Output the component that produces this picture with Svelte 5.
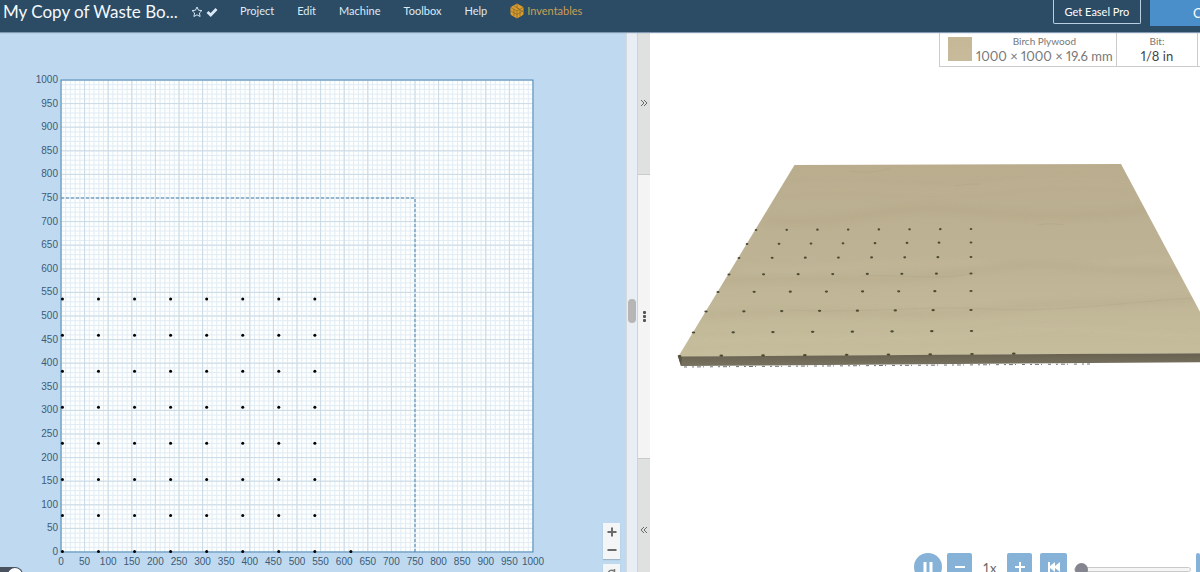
<script lang="ts">
	const menus = ['Project', 'Edit', 'Machine', 'Toolbox', 'Help'];

	// bed drawing: 1000 mm shown over 472 units
	const size = 472;
	const left = 61;
	const bottom = 520;
	const scale = size / 1000;
	const minor = Array.from({ length: 101 }, (_, i) => i * 10);
	const major = Array.from({ length: 21 }, (_, i) => i * 50);
	const x = (mm: number) => left + mm * scale;
	const y = (mm: number) => bottom - mm * scale;

	const pitch = 76.4;
	const holes = Array.from({ length: 8 }, (_, row) =>
		Array.from({ length: row === 0 ? 9 : 8 }, (_, col) => [3 + col * pitch, 1 + row * pitch])
	).flat();

	// each row of drilled holes on the board: first x, first y, last x, last y
	const rows = [
		[756, 230, 971, 229],
		[747, 244, 971, 242.5],
		[739, 258, 971, 257],
		[729, 274.5, 971, 273.5],
		[718, 292, 971, 291],
		[706, 311.5, 971, 310],
		[693.5, 332.5, 971.5, 331],
		[679.5, 356, 972, 354]
	];
	const drilled = rows.flatMap(([x1, y1, x2, y2], r) =>
		Array.from({ length: r === 7 ? 9 : 8 }, (_, i) => ({
			cx: x1 + ((x2 - x1) * i) / 7,
			cy: y1 + ((y2 - y1) * i) / 7,
			rx: 1.3 + r * 0.08
		}))
	);

	let position = $state(0);
	let safe = $state(true);
</script>

<div class="app">
	<header>
		<h1>My Copy of Waste Bo...</h1>
		<div class="marks">
			<button class="icon" aria-label="Favorite">
				<svg width="12" height="12" viewBox="0 0 12 12">
					<path d="M6 1l1.5 3.2 3.4.4-2.5 2.4.7 3.5L6 8.8l-3.1 1.7.7-3.5L1.1 4.6l3.4-.4z" fill="none" stroke="#d5e6f4" />
				</svg>
			</button>
			<svg width="12" height="12" viewBox="0 0 12 12">
				<path d="M1.5 6l3.2 3 5.8-6" fill="none" stroke="#d9e9f6" stroke-width="2.8" />
			</svg>
		</div>
		<nav>
			{#each menus as menu}
				<button>{menu}</button>
			{/each}
			<a href="#inventables">
				<svg width="14" height="16" viewBox="0 0 14 16">
					<path d="M7 1l6 3.4v7.1L7 15l-6-3.5V4.4z" fill="#dc9c2b" stroke="#dc9c2b" stroke-linejoin="round" />
					<path d="M7 1v4l6 3.5M1 4.5l6 3.5 6-3.5M7 8v7M4 3l6 3.5M4 6v7M1 8l6 3.5M10 6.5v6.7M7 11.5l6-3.5" fill="none" stroke="#7e672f" stroke-width=".7" />
				</svg>
				Inventables
			</a>
		</nav>
		<button class="pro">Get Easel Pro</button>
		<button class="carve">C</button>
	</header>

	<main>
		<section class="design">
			<div class="bed">
				<svg class="plot" viewBox="0 0 626 540">
					<rect x={left} y={bottom - size} width={size} height={size} fill="#fdfefe" />
					{#each minor as mm}
						<path class="minor" d="M{x(mm)} {y(0)}V{y(1000)}M{x(0)} {y(mm)}H{x(1000)}" />
					{/each}
					{#each major as mm}
						<path class="major" d="M{x(mm)} {y(0)}V{y(1000)}M{x(0)} {y(mm)}H{x(1000)}" />
						<text class="up" x="58" y={y(mm) + 3}>{mm}</text>
						<text class="along" x={x(mm)} y={bottom + 13}>{mm}</text>
					{/each}
					<rect class="edge" x={left} y={bottom - size} width={size} height={size} />
					<path class="limit" d="M{x(0)} {y(750)}H{x(750)}V{y(0)}" />
					{#each holes as [hx, hy]}
						<circle cx={x(hx)} cy={y(hy)} r="1.5" />
					{/each}
				</svg>
				<label class="switch">
					<input type="checkbox" bind:checked={safe} aria-label="Units" />
				</label>
				<div class="zoom">
					<div class="pair">
						<button aria-label="Zoom in">
							<svg width="10" height="10" viewBox="0 0 10 10"><path d="M5 .5v9M.5 5h9" stroke="#6b6b6b" stroke-width="2" /></svg>
						</button>
						<button aria-label="Zoom out">
							<svg width="10" height="10" viewBox="0 0 10 10"><path d="M.5 5h9" stroke="#6b6b6b" stroke-width="2" /></svg>
						</button>
					</div>
					<button class="home" aria-label="Reset view">
						<svg width="10" height="10" viewBox="0 0 10 10"><path d="M1 5.5C2 2 5 1.5 7 3M7.5 1v4M4 5.5h3" fill="none" stroke="#777" stroke-width="1.5" /></svg>
					</button>
				</div>
			</div>
			<div class="scroll"><span></span></div>
			<div class="splitter">
				<button aria-label="Expand design">
					<svg width="8" height="8" viewBox="0 0 8 8"><path d="M1 1l3 3-3 3M4 1l3 3-3 3" /></svg>
				</button>
				<div class="grip"><i></i><i></i><i></i></div>
				<button aria-label="Expand preview">
					<svg width="8" height="8" viewBox="0 0 8 8"><path d="M4 1L1 4l3 3M7 1L4 4l3 3" /></svg>
				</button>
			</div>
		</section>

		<section class="preview">
			<div class="setup">
				<button class="material">
					<span class="swatch"></span>
					<span><small>Birch Plywood</small><b>1000 × 1000 × 19.6 mm</b></span>
				</button>
				<button class="bit"><small>Bit:</small><b>1/8 in</b></button>
				<span class="rest"></span>
			</div>

			<svg class="board" viewBox="650 67 550 486">
				<defs>
					<linearGradient id="wood" x1="0" y1="0" x2="0" y2="1">
						<stop offset="0" stop-color="#b9ad8e" />
						<stop offset=".45" stop-color="#bdb294" />
						<stop offset="1" stop-color="#c5bd9c" />
					</linearGradient>
					<linearGradient id="side" x1="0" y1="0" x2="0" y2="1">
						<stop offset="0" stop-color="#68614f" />
						<stop offset="1" stop-color="#787260" />
					</linearGradient>
					<clipPath id="top"><path d="M794.5 165L1121 164l101 189-544 4z" /></clipPath>
					<filter id="soft" x="-20%" y="-100%" width="140%" height="300%"><feGaussianBlur stdDeviation="3" /></filter>
				</defs>
				<path d="M794.5 165L1121 164l101 189-544 4z" fill="url(#wood)" />
				<g clip-path="url(#top)">
					<g filter="url(#soft)" fill="none" stroke-width="5" opacity=".22">
						<path d="M780 190c90-12 120 8 220-4s110 4 160-5" stroke="#cbbb9d" />
						<path d="M765 220c80 8 120-16 190-10s120 10 210-2" stroke="#a69775" />
						<path d="M740 268c100 6 150-12 260-3s120-12 190-3" stroke="#cec4a6" />
						<path d="M720 282c80-9 160 6 240-10s150 3 230-1" stroke="#a69879" />
						<path d="M700 316c130-12 190 5 290-6s120-3 220-12" stroke="#a79b7a" />
						<path d="M690 342c130-9 200 4 300-9s150 9 230 0" stroke="#d0c6a8" />
					</g>
					<path d="M955 186q12-2 25-2M1037 225q14-3 27 0M850 171q20 4 40-3M790 310c70 4 130-5 200-1s140-8 220-12M860 276c50-2 80 5 115-3" fill="none" stroke="#9f916f" stroke-width="1" opacity=".14" />
				</g>
				<path d="M678 356.5L1222 353v9L681 366z" fill="url(#side)" />
				<path d="M678 356.5l4 .5-1 9z" fill="#5b5645" />
				<path d="M684 367L1090 364" fill="none" stroke="#33383b" stroke-width="1" stroke-dasharray="3 5 2 3 4 2 1 6" opacity=".7" />
				{#each drilled as hole}
					<ellipse cx={hole.cx} cy={hole.cy} rx={hole.rx} ry="1.1" fill="#4c4a32" />
				{/each}
			</svg>

			<div class="playback">
				<button class="pause" aria-label="Pause">
					<svg width="12" height="12" viewBox="0 0 12 12"><path d="M3 1v10M9 1v10" stroke="#fff" stroke-width="3" /></svg>
				</button>
				<button class="step" aria-label="Slower">
					<svg width="12" height="12" viewBox="0 0 12 12"><path d="M1 6h10" stroke="#fff" stroke-width="2" /></svg>
				</button>
				<output>1x</output>
				<button class="step" aria-label="Faster">
					<svg width="12" height="12" viewBox="0 0 12 12"><path d="M1 6h10M6 1v10" stroke="#fff" stroke-width="2" /></svg>
				</button>
				<button class="rewind" aria-label="Back to start">
					<svg width="14" height="12" viewBox="0 0 14 12"><path d="M1 1h2v4l5-4v4l5-4v10L8 7v4L3 7v4H1z" fill="#fff" /></svg>
				</button>
				<input type="range" min="0" max="100" bind:value={position} aria-label="Simulation progress" />
				<button class="more" aria-label="More"></button>
			</div>
		</section>
	</main>
</div>

<style>
	:global(body) {
		margin: 0;
		background: #fff;
	}

	.app {
		display: flex;
		flex-direction: column;
		height: 100vh;
		overflow: hidden;
		font-family: Lato, 'Liberation Sans', sans-serif;
	}

	button {
		padding: 0;
		border: 0;
		background: none;
		color: inherit;
		font: inherit;
		cursor: pointer;
	}

	svg {
		display: block;
	}

	header {
		display: flex;
		flex: none;
		align-items: flex-start;
		height: 32px;
		background: #2c4b65;
		box-shadow: 0 1px 1px #8099b0;
		color: #dcebf6;
		font-size: 11px;
		line-height: 22px;
		white-space: nowrap;
		z-index: 1;
	}

	h1 {
		width: 180px;
		margin: 0 0 0 3px;
		color: #f4f9fd;
		font-size: 17px;
		font-weight: 400;
		line-height: 24px;
	}

	.marks {
		display: flex;
		gap: 3px;
		margin: 6px 22px 0 8px;
	}

	nav {
		display: flex;
		flex: 1;
		gap: 23px;
	}

	nav a {
		display: flex;
		align-items: center;
		gap: 3px;
		color: #c99f55;
		text-decoration: none;
	}

	.pro {
		box-sizing: border-box;
		width: 88px;
		height: 24px;
		border: 1px solid #b9d0e2;
		border-top: 0;
		border-radius: 0 0 2px 2px;
		color: #fff;
	}

	.carve {
		box-sizing: border-box;
		width: 50px;
		height: 26px;
		margin-left: 9px;
		padding-left: 43px;
		overflow: hidden;
		background: #4a8fca;
		color: #fff;
		font-size: 13px;
		text-align: left;
	}

	main {
		display: flex;
		flex: 1;
		min-height: 0;
	}

	.design {
		display: flex;
		flex: 13 1 0;
		min-width: 0;
	}

	.bed {
		position: relative;
		flex: 1;
		min-width: 0;
		overflow: hidden;
		background: #bfdaf0;
	}

	.plot {
		width: 100%;
		height: 100%;
	}

	.minor {
		stroke: #e1ecf4;
	}

	.major {
		stroke: #cbdae5;
	}

	.edge {
		fill: none;
		stroke: #4586b8;
	}

	.limit {
		fill: none;
		stroke: #4b84ac;
		stroke-dasharray: 3 2;
	}

	text {
		fill: #3d5a76;
		font-family: 'Liberation Sans', sans-serif;
		font-size: 10px;
	}

	.up {
		text-anchor: end;
	}

	.along {
		text-anchor: middle;
	}

	.switch {
		position: absolute;
		bottom: -11px;
		left: -10px;
		width: 33px;
		height: 16px;
		border-radius: 8px;
		background: #4a5260;
	}

	.switch input {
		appearance: none;
		display: block;
		width: 14px;
		height: 14px;
		margin: 1px 1px 1px 18px;
		border-radius: 50%;
		background: #fff;
	}

	.zoom {
		position: absolute;
		right: 6px;
		bottom: -10px;
		display: grid;
		gap: 5px;
		width: 17px;
	}

	.pair,
	.home {
		background: #f4f5f6;
		box-shadow: 0 1px 1px #9fb4c4;
	}

	.pair button,
	.home {
		display: grid;
		place-items: center;
		width: 100%;
		height: 18px;
	}

	.scroll {
		display: grid;
		align-items: center;
		justify-items: center;
		box-sizing: border-box;
		width: 11px;
		padding-top: 18px;
		border-left: 1px solid #d5dadc;
		background: #e8eef3;
	}

	.scroll span {
		width: 8px;
		height: 24px;
		border-radius: 4px;
		background: #b6b6b6;
	}

	.splitter {
		display: flex;
		flex-direction: column;
		box-sizing: border-box;
		width: 13px;
		border-left: 1px solid #d2d2d2;
		background: #dfe0e0;
	}

	.splitter button {
		display: grid;
		flex: 142 1 0;
		place-items: center;
	}

	.splitter button:last-child {
		box-sizing: border-box;
		flex: 0 0 21%;
		padding-top: 30px;
	}

	.splitter path {
		fill: none;
		stroke: #686868;
	}

	.grip {
		display: flex;
		flex: 284 1 0;
		flex-direction: column;
		align-items: center;
		justify-content: center;
		gap: 1px;
		border-block: 1px solid #cacaca;
		background: #f4f4f4;
	}

	.grip i {
		width: 3px;
		height: 3px;
		border-radius: 1px;
		background: #555;
	}

	.preview {
		display: flex;
		flex: 11 1 0;
		flex-direction: column;
		min-width: 0;
		background: #fff;
	}

	.setup {
		display: flex;
		align-self: flex-end;
		box-sizing: border-box;
		height: 35px;
		border-bottom: 1px solid #ccc;
		color: #777;
		font-variant-numeric: proportional-nums;
		white-space: nowrap;
	}

	.setup button {
		box-sizing: border-box;
		border-left: 1px solid #ccc;
		font-variant-numeric: inherit;
	}

	.setup small,
	.setup b {
		display: block;
		font-weight: 400;
	}

	.setup small {
		font-size: 10px;
		line-height: 14px;
	}

	.setup b {
		font-size: 13px;
		line-height: 16px;
	}

	.material {
		display: flex;
		align-items: center;
		gap: 4px;
		width: 177px;
		padding-left: 8px;
	}

	.swatch {
		width: 24px;
		height: 24px;
		background: linear-gradient(#c5b896, #c8bb9c);
	}

	.bit {
		width: 81px;
	}

	.setup .bit b {
		color: #444;
	}

	.rest {
		width: 2px;
		border-left: 1px solid #ccc;
	}

	.board {
		flex: 1;
		width: 100%;
		min-height: 0;
	}

	.playback {
		display: flex;
		flex: none;
		align-items: flex-start;
		align-self: flex-end;
		height: 19px;
		overflow: hidden;
	}

	.playback button {
		display: grid;
		place-items: center;
		height: 28px;
		border-radius: 2px;
		background: #86b2d8;
	}

	.playback .pause {
		width: 28px;
		margin-right: 5px;
		border-radius: 50%;
	}

	.step {
		width: 25px;
	}

	output {
		width: 35px;
		color: #666;
		font-size: 13px;
		line-height: 30px;
		text-align: center;
	}

	.playback .rewind {
		width: 27px;
		margin-left: 8px;
	}

	input[type='range'] {
		appearance: none;
		width: 117px;
		height: 14px;
		margin: 9px 5px 0 7px;
		background: none;
	}

	input[type='range']::-webkit-slider-runnable-track {
		box-sizing: border-box;
		height: 5px;
		border: 1px solid #c9c9c9;
		border-radius: 3px;
		background: #f5f5f5;
	}

	input[type='range']::-webkit-slider-thumb {
		appearance: none;
		width: 13px;
		height: 13px;
		margin-top: -5px;
		border-radius: 50%;
		background: #85858f;
	}

	.playback .more {
		width: 4px;
	}
</style>
